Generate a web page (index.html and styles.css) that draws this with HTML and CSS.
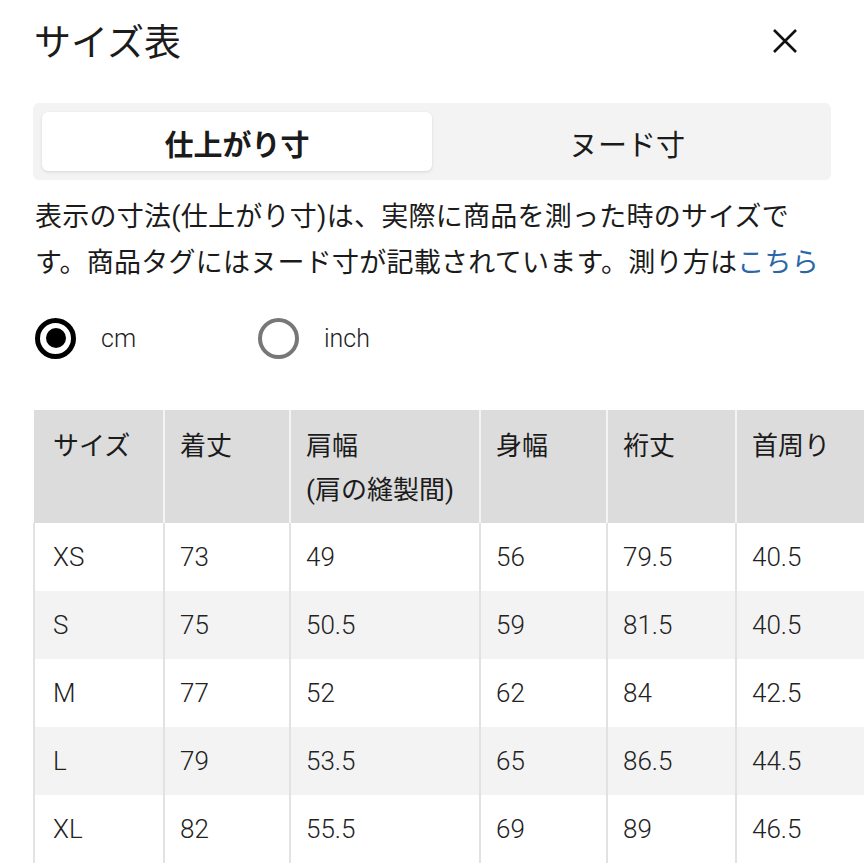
FILE: index.html
```html
<!DOCTYPE html>
<html lang="ja">
<head>
<meta charset="utf-8">
<link rel="stylesheet" href="styles.css">
</head>
<body>
<div class="page">
  <header class="top">
    <h1 class="title">サイズ表</h1>
    <button class="close" aria-label="閉じる">
      <svg width="26" height="26" viewBox="0 0 26 26"><path d="M2 2 L24 24 M24 2 L2 24" stroke="#111" stroke-width="2.6" fill="none"/></svg>
    </button>
  </header>

  <div class="tabs">
    <div class="tab active">仕上がり寸</div>
    <div class="tab">ヌード寸</div>
  </div>

  <p class="desc">表示の寸法(仕上がり寸)は、実際に商品を測った時のサイズです。商品タグにはヌード寸が記載されています。測り方は<a class="link">こちら</a></p>

  <div class="units">
    <label class="unit"><span class="radio on"></span><span class="unit-label">cm</span></label>
    <label class="unit"><span class="radio"></span><span class="unit-label">inch</span></label>
  </div>
</div>

<div class="table-wrap">
  <table class="size-table">
    <colgroup>
      <col class="c1"><col class="c2"><col class="c3"><col class="c4"><col class="c5"><col class="c6">
    </colgroup>
    <thead>
      <tr><th>サイズ</th><th>着丈</th><th>肩幅<br>(肩の縫製間)</th><th>身幅</th><th>裄丈</th><th>首周り</th></tr>
    </thead>
    <tbody>
      <tr><td>XS</td><td>73</td><td>49</td><td>56</td><td>79.5</td><td>40.5</td></tr>
      <tr><td>S</td><td>75</td><td>50.5</td><td>59</td><td>81.5</td><td>40.5</td></tr>
      <tr><td>M</td><td>77</td><td>52</td><td>62</td><td>84</td><td>42.5</td></tr>
      <tr><td>L</td><td>79</td><td>53.5</td><td>65</td><td>86.5</td><td>44.5</td></tr>
      <tr><td>XL</td><td>82</td><td>55.5</td><td>69</td><td>89</td><td>46.5</td></tr>
    </tbody>
  </table>
</div>
</body>
</html>
```

FILE: styles.css
```css
html, body {
  margin: 0;
  padding: 0;
  background: #fff;
  overflow: hidden;
}
body {
  font-family: Roboto, "Noto Sans CJK JP", sans-serif;
  color: #1b1b1b;
  width: 864px;
  height: 864px;
}
.page {
  padding: 0 33px;
}
.top {
  display: flex;
  align-items: center;
  justify-content: space-between;
  height: 82px;
}
.title {
  margin: 0;
  font-family: "Noto Sans CJK JP", sans-serif;
  font-weight: 400;
  font-size: 37px;
  line-height: 48px;
  padding-left: 1px;
  margin-top: -2px;
}
.close {
  border: 0;
  background: none;
  padding: 0;
  margin-right: 33px;
  width: 26px;
  height: 26px;
  display: flex;
}
.tabs {
  margin-top: 21px;
  display: grid;
  grid-template-columns: 1fr 1fr;
  background: #f3f3f3;
  border-radius: 6px;
  padding: 9px;
  height: 59px;
}
.tab {
  display: flex;
  align-items: center;
  justify-content: center;
  font-family: "Noto Sans CJK JP", sans-serif;
  font-size: 29px;
  color: #1b1b1b;
  padding-top: 3px;
}
.tab.active {
  background: #fff;
  border-radius: 6px;
  font-weight: 700;
  box-shadow: 0 1px 3px rgba(0,0,0,0.12);
}
.desc {
  margin: 14px 0 0;
  font-family: Roboto, "Noto Sans CJK JP", sans-serif;
  font-size: 27px;
  line-height: 46px;
  letter-spacing: 0.25px;
  padding-left: 2px;
}
.link {
  color: #2b67a8;
  text-decoration: none;
}
.units {
  display: flex;
  align-items: center;
  margin-top: 32px;
  height: 40px;
}
.unit {
  display: flex;
  align-items: center;
  width: 223px;
}
.radio {
  box-sizing: border-box;
  width: 41px;
  height: 41px;
  border-radius: 50%;
  border: 4px solid #777;
  display: flex;
  align-items: center;
  justify-content: center;
  margin-left: 2px;
}
.radio.on {
  border: 5px solid #000;
}
.radio.on::after {
  content: "";
  width: 20px;
  height: 20px;
  border-radius: 50%;
  background: #000;
}
.unit-label {
  margin-left: 25px;
  font-size: 25px;
  font-weight: 300;
  color: #222;
}
.table-wrap {
  margin-top: 52px;
  padding-left: 33px;
}
.size-table {
  border-collapse: collapse;
  table-layout: fixed;
  width: 831px;
  font-size: 26px;
}
.c1 { width: 130px; }
.c2 { width: 126px; }
.c3 { width: 190px; }
.c4 { width: 127px; }
.c5 { width: 129px; }
.c6 { width: 129px; }
.size-table th {
  background: #dcdcdc;
  font-family: Roboto, "Noto Sans CJK JP", sans-serif;
  font-weight: 400;
  text-align: left;
  vertical-align: top;
  line-height: 44px;
  height: 113px;
  box-sizing: border-box;
  padding: 14px 10px 10px 15px;
  border-left: 2px solid #f4f4f4;
  color: #1b1b1b;
}
.size-table th:first-child {
  border-left: 0;
  padding-left: 19px;
}
.size-table td {
  height: 68px;
  box-sizing: border-box;
  padding: 0 10px 0 15px;
  border-left: 2px solid #e2e2e2;
  color: #222;
  font-weight: 300;
  line-height: 30px;
}
.size-table td:first-child {
  padding-left: 18px;
}
.size-table tbody tr:nth-child(even) td {
  background: #f3f3f3;
}
```
